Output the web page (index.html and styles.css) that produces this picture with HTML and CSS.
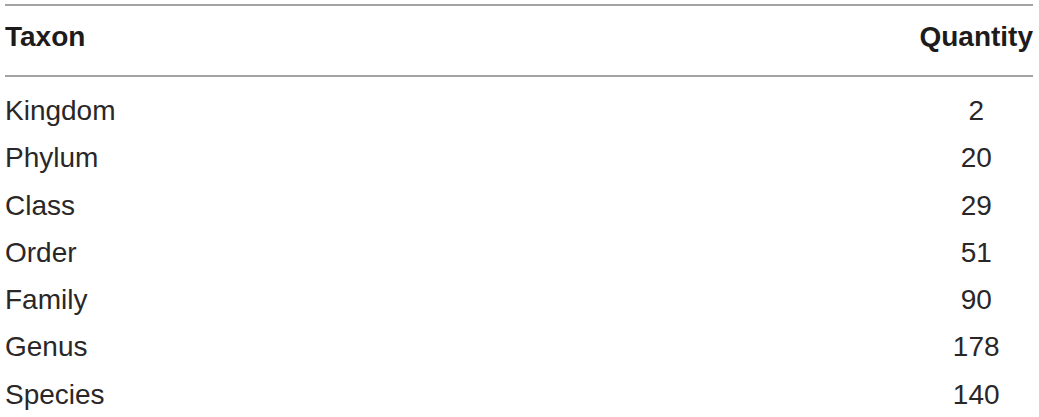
FILE: index.html
```html
<!DOCTYPE html>
<html lang="en">
    <head>
        <meta charset="UTF-8">
        <title>Taxon Quantity</title>
        <link rel="stylesheet" href="styles.css">
    </head>
    <body>

        <table class="taxa">
            <thead>
                <tr>
                    <th class="name">Taxon</th>
                    <th class="qty">Quantity</th>
                </tr>
            </thead>
            <tbody>
                <tr><td class="name">Kingdom</td><td class="qty">2</td></tr>
                <tr><td class="name">Phylum</td><td class="qty">20</td></tr>
                <tr><td class="name">Class</td><td class="qty">29</td></tr>
                <tr><td class="name">Order</td><td class="qty">51</td></tr>
                <tr><td class="name">Family</td><td class="qty">90</td></tr>
                <tr><td class="name">Genus</td><td class="qty">178</td></tr>
                <tr><td class="name">Species</td><td class="qty">140</td></tr>
            </tbody>
        </table>

    </body>
</html>
```

FILE: styles.css
```css
body {
    margin: 0;
    padding: 4px 6px 0 5px;
    background: #fff;
    font-family: 'Liberation Sans', Arial, sans-serif;
    color: #2a2728;
}
.taxa {
    width: 1028px;
    border-collapse: collapse;
    font-size: 28px;
}
.taxa th,
.taxa td {
    padding: 0;
    font-weight: normal;
}
.taxa thead tr {
    border-top: 2px solid #a3a3a3;
    border-bottom: 2px solid #a3a3a3;
}
.taxa th {
    font-weight: bold;
    color: #1e1b1c;
    line-height: 32px;
    padding: 15px 0 22px;
}
.taxa tbody tr:first-child td {
    padding-top: 10px;
}
.taxa td {
    line-height: 47.3px;
}
.name {
    text-align: left;
}
.qty {
    width: 1%;
    white-space: nowrap;
    text-align: center;
}
```
